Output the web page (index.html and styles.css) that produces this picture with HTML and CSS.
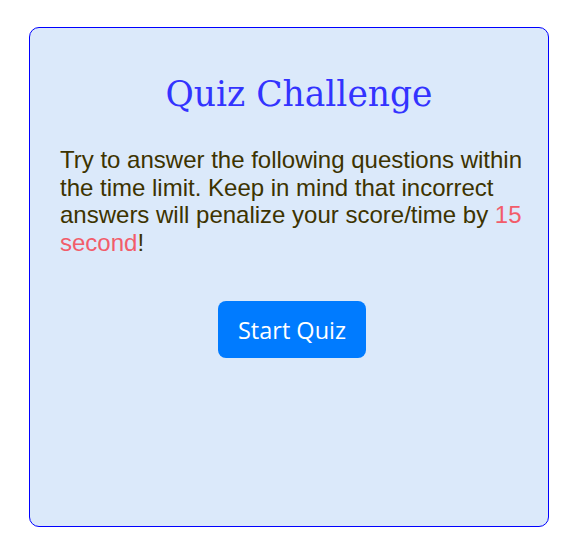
FILE: index.html
```html
<!DOCTYPE html>
<html>
<head>
<meta charset="utf-8">
<link rel="stylesheet" href="styles.css">
</head>
<body>
<div class="card">
  <h1 class="title">Quiz Challenge</h1>
  <p class="intro">Try to answer the following questions within the time limit. Keep in mind that incorrect answers will penalize your score/time by <span class="penalty">15 second</span>!</p>
  <div class="actions">
    <button class="start">Start Quiz</button>
  </div>
</div>
</body>
</html>
```
FILE: styles.css
```css
html, body {
  margin: 0;
  padding: 0;
  background: #ffffff;
}
body {
  padding: 27px 0 0 29px;
}
.card {
  box-sizing: border-box;
  width: 520px;
  height: 500px;
  border: 1px solid #0000ff;
  border-radius: 10px;
  background: #dbe9fa;
  padding: 0;
}
.title {
  margin: 44px 0 0;
  padding-left: 20px;
  text-align: center;
  font-family: "DejaVu Serif", "Liberation Serif", serif;
  font-weight: normal;
  font-size: 34.5px;
  line-height: 44px;
  color: #3333ff;
}
.intro {
  margin: 30px 0 0 30px;
  width: 466px;
  font-family: "Liberation Sans", Arial, sans-serif;
  font-size: 24px;
  line-height: 27.6px;
  color: #3d3300;
}
.penalty {
  color: #f25c6a;
}
.actions {
  display: flex;
  justify-content: center;
  margin-top: 45px;
  padding-left: 6px;
}
.start {
  width: 148px;
  height: 57px;
  border: none;
  border-radius: 8px;
  background: #007bff;
  color: #ffffff;
  font-family: "Open Sans", "Noto Sans", sans-serif;
  font-size: 23.5px;
  padding: 0;
}
```
